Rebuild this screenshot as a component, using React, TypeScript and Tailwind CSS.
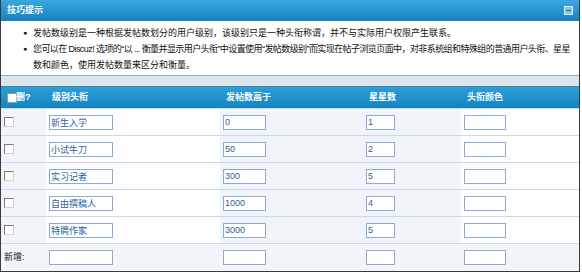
import React from "react";

const rows = [
  { name: "新生入学", posts: "0", stars: "1" },
  { name: "小试牛刀", posts: "50", stars: "2" },
  { name: "实习记者", posts: "300", stars: "5" },
  { name: "自由撰稿人", posts: "1000", stars: "4" },
  { name: "特聘作家", posts: "3000", stars: "5" },
];

function Box() {
  return <span className="block w-[10px] h-[10px] border border-t-[#7a7a7a] border-l-[#7a7a7a] border-b-[#d0d0d0] border-r-[#d0d0d0] bg-white" />;
}

function Field({ w, v }: { w: string; v: string }) {
  return (
    <input
      readOnly
      value={v}
      className={`${w} h-[15px] border border-[#8aabd6] bg-white px-[1px] text-[9px] leading-[13px] text-[#2b5f9e] outline-none`}
    />
  );
}

export default function App() {
  return (
    <div className="w-[582px] h-[274px] bg-white" style={{ fontFamily: '"Liberation Sans", "Noto Sans CJK SC", sans-serif' }}>
      <div className="w-[580px] border-x border-b border-[#3a3a3a] text-[9px] text-[#111]">
        <div className="h-[21px] flex items-center justify-between pl-[6px] pr-[6px] bg-gradient-to-b from-[#3aa8de] to-[#1382c0]">
          <span className="font-bold text-white">技巧提示</span>
          <span className="relative w-[9px] h-[9px] border border-[#d8eefa] bg-[#86c6ea] flex items-center justify-center">
            <span className="block w-[5px] h-[1px] bg-[#1d5f8e]" />
          </span>
        </div>
        <div className="h-[55px] bg-white border-b border-[#9aa9b8] pt-[4px] pl-[22px] leading-[16px]">
          <div className="flex">
            <span className="shrink-0 w-[10px] text-[7px]">●</span>
            <span>发帖数级别是一种根据发帖数划分的用户级别，该级别只是一种头衔称谓，并不与实际用户权限产生联系。</span>
          </div>
          <div className="flex">
            <span className="shrink-0 w-[10px] text-[7px]">●</span>
            <span className="whitespace-nowrap">
              <span className="tracking-[-0.58px]">您可以在 Discuz! 选项的“以 ... 衡量并显示用户头衔”中设置使用“发帖数级别”而实现在帖子浏览页面中，对非系统组和特殊组的普通用户头衔、星星</span>
              <br />
              数和颜色，使用发帖数量来区分和衡量。
            </span>
          </div>
        </div>
        <div className="h-[10px] bg-[#dde6ef]" />
        <div className="border-t border-[#5d7b87]">
          <div className="h-[21px] grid grid-cols-[45px_174px_143px_98px_118px] items-center bg-gradient-to-b from-[#2a9fd8] to-[#1484c2] font-bold text-white">
            <div className="flex items-center pl-[6px]">
              <span className="block w-[10px] h-[10px] bg-white border border-[#9a9a9a] -mr-[1px]" />
              <span>删?</span>
            </div>
            <div className="pl-[6px]">级别头衔</div>
            <div className="pl-[6px]">发帖数高于</div>
            <div className="pl-[6px]">星星数</div>
            <div className="pl-[6px]">头衔颜色</div>
          </div>
          {rows.map((r) => (
            <div key={r.name} className="h-[27px] grid grid-cols-[45px_174px_143px_98px_118px] border-t border-[#c6daee]">
              <div className="bg-[#f1f5f9] flex items-center pl-[3px]"><Box /></div>
              <div className="bg-white flex items-center pl-[3px]"><Field w="w-[64px]" v={r.name} /></div>
              <div className="bg-[#f1f5f9] flex items-center pl-[3px]"><Field w="w-[43px]" v={r.posts} /></div>
              <div className="bg-[#f1f5f9] flex items-center pl-[3px]"><Field w="w-[29px]" v={r.stars} /></div>
              <div className="bg-white flex items-center pl-[3px]"><Field w="w-[42px]" v="" /></div>
            </div>
          ))}
          <div className="h-[28px] grid grid-cols-[45px_174px_143px_98px_118px] border-t border-[#c6daee] bg-[#f1f5f9]">
            <div className="flex items-center pl-[3px]">新增:</div>
            <div className="flex items-center pl-[3px]"><Field w="w-[64px]" v="" /></div>
            <div className="flex items-center pl-[3px]"><Field w="w-[43px]" v="" /></div>
            <div className="flex items-center pl-[3px]"><Field w="w-[29px]" v="" /></div>
            <div className="flex items-center pl-[3px]"><Field w="w-[42px]" v="" /></div>
          </div>
        </div>
      </div>
    </div>
  );
}
